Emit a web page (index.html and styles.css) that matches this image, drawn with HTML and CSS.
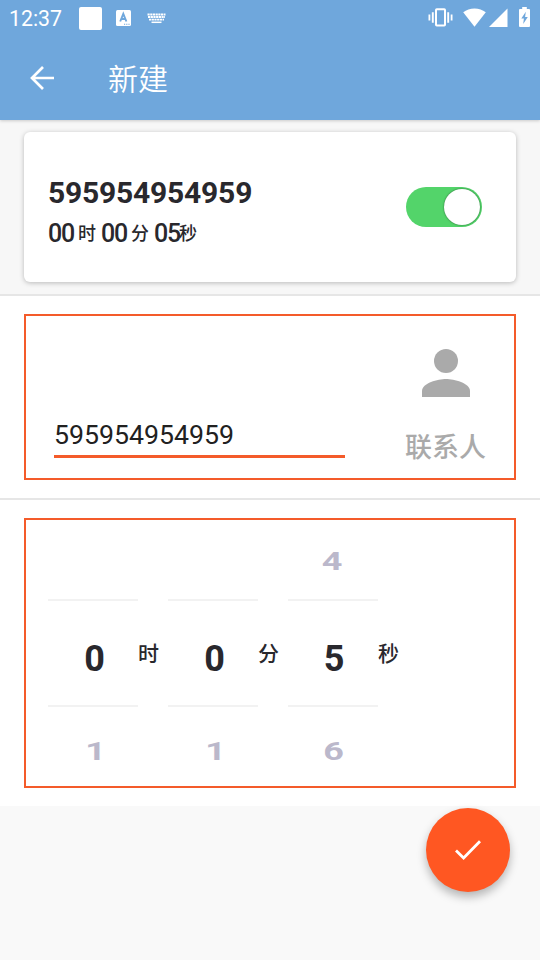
FILE: index.html
```html
<!DOCTYPE html>
<html lang="zh-CN">
<head>
<meta charset="utf-8">
<title>新建</title>
<link rel="stylesheet" href="styles.css">
</head>
<body>
<header class="header">
  <div class="status">
    <span class="clock">12:37</span>
    <span class="square"></span>
    <svg class="ime" width="15" height="16" viewBox="0 0 15 16"><rect width="15" height="16" rx="1.5" fill="#fff"/><path d="M4.2 11.5 7.3 3.8l3.1 7.7M5.3 9h4" fill="none" stroke="#6fa7dc" stroke-width="1.9"/><path d="M8 14.2h1.2m1 0h1.2m1 0h1.2" stroke="#6fa7dc" stroke-width="1.1"/></svg>
    <svg class="keyboard" width="19" height="11" viewBox="0 0 19 11" fill="none" stroke="#fff"><path d="M.5 1.5h18" stroke-width="2" stroke-dasharray="2.2 .5"/><path d="M1 4.1h17" stroke-width="2" stroke-dasharray="2.2 .5"/><path d="M2 6.7h15" stroke-width="1.8" stroke-dasharray="2.2 .5"/><path d="M4.5 9.3h10" stroke-width="1.5"/></svg>
    <span class="spacer"></span>
    <svg class="vibrate" width="25" height="19" viewBox="0 0 25 19" fill="none" stroke="#fff"><rect x="8" y="1.2" width="9" height="16.4" rx=".8" stroke-width="2"/><path d="M4.8 4.2v10.6M20.2 4.2v10.6" stroke-width="1.9"/><path d="M1.4 6.6v5.8M23.6 6.6v5.8" stroke-width="1.8"/></svg>
    <svg class="wifi" width="23" height="19" viewBox="0 0 23 19"><path d="M11.5 18.8.2 4.3C3.4 1.8 7.2.5 11.5.5s8.1 1.3 11.3 3.8z" fill="#fff"/></svg>
    <svg class="signal" width="19" height="19" viewBox="0 0 19 19"><path d="M0 19 18.5.5V19z" fill="#fff"/></svg>
    <svg class="battery" width="11" height="20" viewBox="0 0 11 20"><path d="M3.2 0h4.6v2H10q1 0 1 1v16q0 1-1 1H1q-1 0-1-1V3q0-1 1-1h2.2z" fill="#fff"/><path d="M6.8 4.8 2.3 11.6h2.6l-.7 5.3 4.6-7H6.1z" fill="#6fa7dc"/></svg>
  </div>
  <div class="toolbar">
    <svg class="back" width="24" height="24" viewBox="0 0 24 24" fill="none" stroke="#fff" stroke-width="2.7"><path d="M24 12H2.2M13 1 2 12l11 11"/></svg>
    <h1 class="title">新建</h1>
  </div>
</header>
<section class="summary">
  <div class="card">
    <div class="info">
      <div class="name">595954954959</div>
      <div class="duration">
        <span class="num">00</span><span class="unit">时</span>
        <span class="num">00</span><span class="unit">分</span>
        <span class="num tight">05</span><span class="unit">秒</span>
      </div>
    </div>
    <div class="switch"><span class="thumb"></span></div>
  </div>
</section>
<section class="panel contact-panel">
  <div class="frame contact">
    <div class="field">595954954959</div>
    <div class="person">
      <svg width="48" height="48" viewBox="0 0 48 48" fill="#aaa"><circle cx="24" cy="12" r="12"/><path d="M0 48v-6c0-8 16-12 24-12s24 4 24 12v6z"/></svg>
      <span class="person-label">联系人</span>
    </div>
  </div>
</section>
<section class="panel picker-panel">
  <div class="frame picker">
    <div class="wheel"><span class="side"></span><span class="current">0</span><span class="side next">1</span></div>
    <span class="wheel-unit">时</span>
    <div class="wheel"><span class="side"></span><span class="current">0</span><span class="side next">1</span></div>
    <span class="wheel-unit">分</span>
    <div class="wheel seconds"><span class="side">4</span><span class="current">5</span><span class="side next">6</span></div>
    <span class="wheel-unit">秒</span>
  </div>
</section>
<div class="fab"><svg width="26" height="20" viewBox="0 0 26 20" fill="none" stroke="#fff" stroke-width="2.8"><path d="M1 10.5 8.6 18 25 1.2"/></svg></div>
</body>
</html>
```
FILE: styles.css
```css
* { box-sizing: border-box; }

body {
  margin: 0;
  width: 540px;
  height: 960px;
  overflow: hidden;
  background: #f9f9f9;
  color: #29282d;
  font-family: Roboto, "Noto Sans CJK SC", sans-serif;
}

svg { display: block; flex: none; }

.header {
  position: relative;
  height: 120px;
  background: #6fa7dc;
  color: #fff;
  box-shadow: 0 1px 3px rgba(0, 0, 0, .18);
}

.status {
  display: flex;
  align-items: center;
  height: 36px;
  padding: 0 10px 0 9px;
}

.clock { width: 70px; font-size: 21.3px; font-weight: 450; line-height: 36px; padding-top: 2px; }
.square { width: 23px; height: 23px; margin-top: 1px; border-radius: 2px; background: #fff; }
.ime { margin-left: 14px; }
.keyboard { margin-left: 16px; margin-top: 1px; }
.spacer { flex: 1; }
.vibrate { margin-top: -1px; }
.wifi { margin-left: 10px; margin-top: -1px; }
.signal { margin-left: 3px; margin-top: -1px; }
.battery { margin-left: 11px; margin-top: -2px; }

.toolbar { display: flex; align-items: center; height: 84px; padding-left: 30px; }

.title { margin: 3px 0 0 54px; font-size: 30px; font-weight: 350; line-height: 40px; }

.summary {
  height: 176px;
  padding: 12px 24px 0;
  background: #f7f7f7;
  border-bottom: 2px solid #e6e6e6;
}

.card {
  display: flex;
  justify-content: space-between;
  height: 150px;
  padding: 44px 34px 0 24px;
  border-radius: 6px;
  background: #fff;
  box-shadow: 0 1px 5px rgba(0, 0, 0, .25);
}

.name { font-size: 30px; font-weight: 700; line-height: 34px; letter-spacing: -.2px; }

.duration { display: flex; align-items: baseline; height: 36px; margin-top: 7px; line-height: 34px; }
.num { width: 30px; font-size: 25px; font-weight: 500; letter-spacing: -1.2px; }
.num.tight { width: 25px; }
.unit { width: 23px; font-size: 18px; font-weight: 500; transform: translateY(-2px); }

.switch {
  display: flex;
  justify-content: flex-end;
  width: 76px;
  height: 40px;
  margin-top: 11px;
  padding: 2px;
  border-radius: 20px;
  background: #53d46a;
}
.thumb { width: 36px; height: 36px; border-radius: 50%; background: #fff; box-shadow: 0 0 2px rgba(0, 0, 0, .55); }

.panel { padding: 18px 24px 0; background: #fff; }
.contact-panel { height: 204px; border-bottom: 2px solid #e6e6e6; }
.picker-panel { height: 306px; }
.frame { display: flex; border: 2px solid #f45b2a; }

.contact { height: 166px; padding-left: 28px; }
.field {
  width: 291px;
  height: 42px;
  margin-top: 100px;
  border-bottom: 3px solid #f45b2a;
  color: #212121;
  font-size: 26.7px;
  line-height: 38px;
}
.person {
  display: flex;
  flex-direction: column;
  align-items: center;
  width: 82px;
  margin: 33px 0 0 60px;
}
.person-label { margin: 31px 1px 0 0; color: #aaa; font-size: 27px; font-weight: 500; line-height: 40px; white-space: nowrap; }

.picker { height: 270px; padding-left: 22px; }
.wheel { width: 90px; padding-top: 3px; text-align: center; font-weight: 700; font-size: 36px; }
.side { display: block; height: 76px; padding: 1px 2px 0 0; line-height: 76px; color: #bbb8cb; transform: scaleY(.69); }
.next { padding: 10px 0 0 5px; }
.current {
  display: block;
  height: 108px;
  padding-left: 3px;
  border: solid #f2f2f2;
  border-width: 2px 0;
  line-height: 116px;
}
.seconds .next { padding-left: 1px; }
.seconds .current { padding-left: 2px; }
.wheel-unit { width: 30px; margin-top: 119px; font-size: 21px; font-weight: 500; line-height: 30px; }

.fab {
  position: absolute;
  right: 30px;
  bottom: 68px;
  display: flex;
  align-items: center;
  justify-content: center;
  width: 84px;
  height: 84px;
  border-radius: 50%;
  background: #ff5722;
  box-shadow: 0 5px 10px rgba(0, 0, 0, .28);
}
```
